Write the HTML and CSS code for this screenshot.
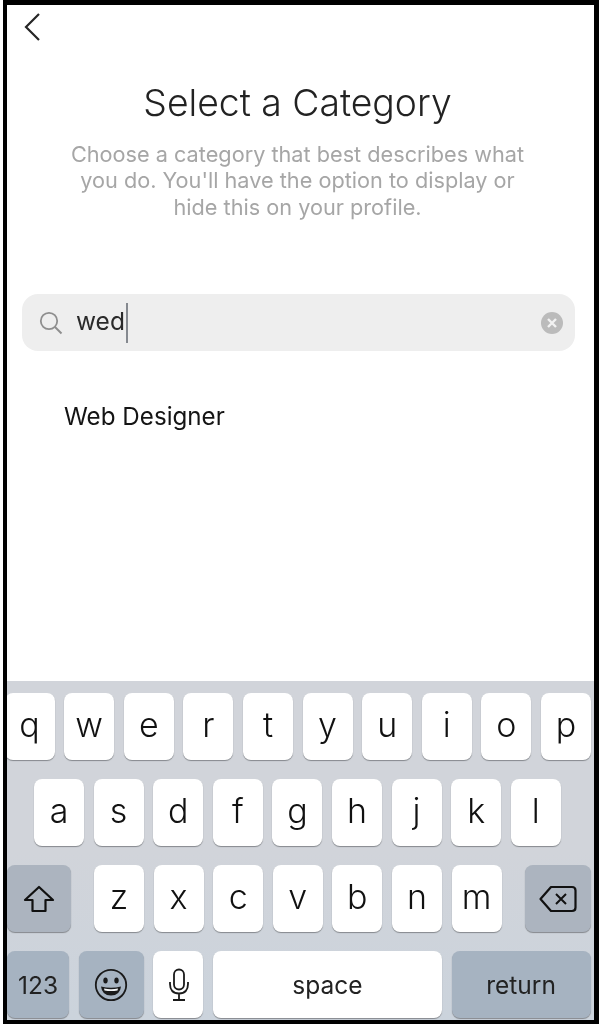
FILE: index.html
```html
<!DOCTYPE html>
<html lang="en">
<head>
  <meta charset="UTF-8" />
  <meta name="viewport" content="width=device-width, initial-scale=1.0" />
  <title>Select a Category</title>
  <link rel="stylesheet" href="styles.css">
</head>
<body>

<section class="screen">
  <div class="screen--top">
    <svg class="back" width="18" height="30" viewBox="0 0 18 30">
      <path d="M16 2 L3 15 L16 28" fill="none" stroke="#262626" stroke-width="2.2" />
    </svg>
  </div>

  <h1 class="title">Select a Category</h1>
  <p class="subtitle">Choose a category that best describes what<br>you do. You'll have the option to display or<br>hide this on your profile.</p>

  <div class="search">
    <svg class="search--icon" width="24" height="24" viewBox="0 0 24 24">
      <circle cx="10" cy="10" r="8.2" fill="none" stroke="#8e8e8e" stroke-width="1.8" />
      <path d="M16 16 L22.5 22.5" stroke="#8e8e8e" stroke-width="2" />
    </svg>
    <span class="search--text">wed</span>
    <span class="search--caret"></span>
    <svg class="search--clear" width="22" height="22" viewBox="0 0 22 22">
      <circle cx="11" cy="11" r="11" fill="#bbbbbb" />
      <path d="M7 7 L15 15 M15 7 L7 15" stroke="#f2f2f2" stroke-width="2.4" />
    </svg>
  </div>

  <div class="result">Web Designer</div>

  <div class="keyboard">
    <div class="row row--top">
      <div class="key">q</div><div class="key">w</div><div class="key">e</div><div class="key">r</div><div class="key">t</div>
      <div class="key">y</div><div class="key">u</div><div class="key">i</div><div class="key">o</div><div class="key">p</div>
    </div>
    <div class="row row--home">
      <div class="key">a</div><div class="key">s</div><div class="key">d</div><div class="key">f</div><div class="key">g</div>
      <div class="key">h</div><div class="key">j</div><div class="key">k</div><div class="key">l</div>
    </div>
    <div class="row">
      <div class="key key--mod key--shift">
        <svg width="32" height="28" viewBox="0 0 32 28">
          <path d="M16 2 L30 15 L22.5 15 L22.5 26 L9.5 26 L9.5 15 L2 15 Z" fill="none" stroke="#111" stroke-width="2.2" stroke-linejoin="round" />
        </svg>
      </div>
      <div class="key">z</div><div class="key">x</div><div class="key">c</div><div class="key">v</div>
      <div class="key">b</div><div class="key">n</div><div class="key">m</div>
      <div class="key key--mod key--delete">
        <svg width="38" height="28" viewBox="0 0 38 28">
          <path d="M12 2 L33 2 Q36.5 2 36.5 5.5 L36.5 22.5 Q36.5 26 33 26 L12 26 L1.5 14 Z" fill="none" stroke="#111" stroke-width="2.2" stroke-linejoin="round" />
          <path d="M17 9 L27 19 M27 9 L17 19" stroke="#111" stroke-width="2" />
        </svg>
      </div>
    </div>
    <div class="row">
      <div class="key key--bottom key--num">123</div>
      <div class="key key--bottom key--emoji">
        <svg width="34" height="34" viewBox="0 0 34 34">
          <circle cx="17" cy="17" r="15.2" fill="none" stroke="#1a1a1a" stroke-width="1.8" />
          <ellipse cx="11.5" cy="12.5" rx="2.2" ry="3" fill="#1a1a1a" />
          <ellipse cx="22.5" cy="12.5" rx="2.2" ry="3" fill="#1a1a1a" />
          <path d="M7 18.5 Q17 21 27 18.5 Q26 27.5 17 27.5 Q8 27.5 7 18.5 Z" fill="#1a1a1a" />
          <path d="M10 20.5 Q17 22 24 20.5 L23.5 22.5 Q17 23.5 10.5 22.5 Z" fill="#f2f4f6" />
        </svg>
      </div>
      <div class="key key--mic">
        <svg width="22" height="34" viewBox="0 0 22 34">
          <rect x="6" y="1.5" width="10" height="20" rx="5" fill="none" stroke="#1a1a1a" stroke-width="1.8" />
          <path d="M2 14 L2 16 Q2 25.5 11 25.5 Q20 25.5 20 16 L20 14 M11 25.5 L11 32 M5 32 L17 32" fill="none" stroke="#1a1a1a" stroke-width="1.8" />
        </svg>
      </div>
      <div class="key key--space">space</div>
      <div class="key key--bottom key--return">return</div>
    </div>
  </div>
</section>

</body>
</html>
```

FILE: styles.css
```css
html, body {
  height: 100%;
}

body {
  margin: 0;
  background-color: #ffffff;
  font-family: Inter, "Liberation Sans", sans-serif;
}

/* the reference is a slightly soft phone capture */
.screen {
  display: flex;
  flex-direction: column;
  box-sizing: border-box;
  width: 596px;
  height: 1024px;
  margin-left: 3px;
  border: solid #000000;
  border-width: 5px 5px 4px 4px;
  background-color: #ffffff;
  overflow: hidden;
  filter: blur(0.4px);
}

.screen--top {
  height: 58px;
  padding-left: 16px;
}

.back {
  display: block;
  margin-top: 7px;
}

.title {
  margin: 18px 0 0;
  padding-right: 6px;
  font-size: 37.3px;
  font-weight: 300;
  line-height: 44px;
  text-align: center;
  color: #222222;
}

.subtitle {
  margin: 16px 0 0;
  padding-right: 6px;
  font-size: 21.7px;
  line-height: 26.4px;
  text-align: center;
  color: #a6a6a6;
}

.search {
  display: flex;
  align-items: center;
  height: 57px;
  margin: 74px 19px 0 15px;
  padding: 0 12px 0 17px;
  border-radius: 16px;
  background-color: #eeeeee;
}

.search--icon {
  margin-right: 13px;
}

.search--text {
  padding-bottom: 4px;
  font-size: 24.5px;
  color: #2a2a2a;
}

.search--caret {
  width: 2px;
  height: 40px;
  margin-left: 1px;
  background-color: #85898f;
}

.search--clear {
  margin-left: auto;
}

.result {
  margin: 51px 0 0 57px;
  font-size: 24.2px;
  line-height: 30px;
  color: #141414;
}

.keyboard {
  display: flex;
  flex-direction: column;
  gap: 19px;
  margin-top: auto;
  padding: 12px 3px 2px 0;
  background: linear-gradient(#d1d4da 0%, #d1d4da 50%, #cbd3dc 100%);
}

.row {
  display: flex;
  gap: 9.6px;
}

.row--top {
  margin-left: -2.4px;
}

.row--home {
  padding-left: 27px;
}

.key {
  display: flex;
  flex: none;
  align-items: center;
  justify-content: center;
  box-sizing: border-box;
  width: 50px;
  height: 67px;
  padding-bottom: 5px;
  border-radius: 8px;
  background-color: #ffffff;
  box-shadow: 0 1px 1px #85888d;
  font-size: 34px;
  font-weight: 300;
  color: #111111;
}

.key--mod {
  padding-bottom: 0;
  background-color: #acb4bf;
}

.key--bottom {
  padding-bottom: 0;
  background-color: #a6b3c1;
  font-size: 24.5px;
  font-weight: 400;
  color: #222222;
}

.key--shift {
  width: 64px;
  margin-right: 13.4px;
}

.key--delete {
  width: 66px;
  margin-left: 13.4px;
}

.key--num {
  width: 62px;
}

.key--emoji {
  width: 65.2px;
}

.key--mic {
  padding-bottom: 0;
  padding-left: 1px;
}

.key--space {
  width: 229px;
  padding-bottom: 0;
  font-size: 24.5px;
  font-weight: 400;
  color: #222222;
}

.key--return {
  width: 139px;
}
```
